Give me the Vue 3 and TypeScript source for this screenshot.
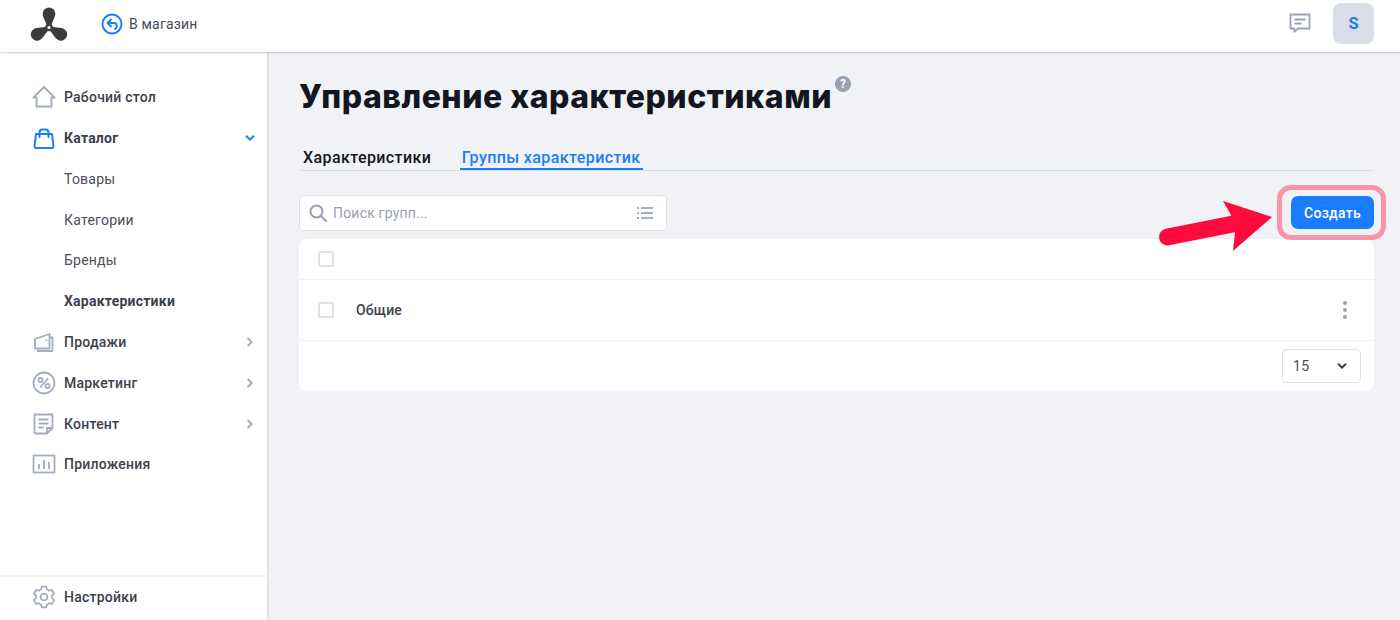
<script setup lang="ts">
const catalogChildren: { label: string; active?: boolean }[] = [
  { label: 'Товары' },
  { label: 'Категории' },
  { label: 'Бренды' },
  { label: 'Характеристики', active: true },
]

function gearPath(): string {
  const pts: string[] = []
  const polar = (r: number, deg: number) => {
    const a = (deg * Math.PI) / 180
    return `${(12 + r * Math.cos(a)).toFixed(2)} ${(12 + r * Math.sin(a)).toFixed(2)}`
  }
  for (let i = 0; i < 6; i++) {
    const c = i * 60 - 90
    pts.push(polar(8.2, c - 21), polar(10.6, c - 11), polar(10.6, c + 11), polar(8.2, c + 21))
  }
  return 'M' + pts.join('L') + 'Z'
}
const gear = gearPath()
const blade = 'M-2.400 -1.500C-2.800 -6 -6.300 -9.500 -6.300 -13.700A6.300 6.300 0 0 1 6.300 -13.700C6.300 -9.500 2.800 -6 2.400 -1.500Z'
</script>

<template>
  <div class="page">
    <header class="topbar">
      <svg class="logo" width="38" height="34" viewBox="0 0 38 34">
        <g fill="#3a3c40">
          <path :d="blade" transform="translate(19 20.500)" />
          <path :d="blade" transform="translate(19 20.500) rotate(120)" />
          <path :d="blade" transform="translate(19 20.500) rotate(240)" />
          <circle cx="19" cy="20.500" r="3.800" />
        </g>
        <circle cx="19" cy="20.500" r="1.600" fill="#fff" />
      </svg>
      <a class="store-link">
        <svg width="22" height="22" viewBox="0 0 22 22" fill="none" stroke="#1a7cff">
          <circle cx="11" cy="11" r="9.500" stroke-width="1.900" />
          <path d="M10 6.500 6.500 10l3.500 3.500M7 10h6c3.200 0 3.800 4.500 1 6" stroke-width="1.900" stroke-linecap="round" stroke-linejoin="round" />
        </svg>
        <span>В магазин</span>
      </a>
      <div class="top-right">
        <svg width="22" height="22" viewBox="0 0 22 22" fill="none" stroke="#9aa3b2" stroke-width="1.800">
          <path d="M1.500 1.500h19v14H9l-3.700 3.300v-3.300H1.500z" stroke-linejoin="round" />
          <path d="M5.500 6.500h11M5.500 10.500h7" />
        </svg>
        <div class="avatar">S</div>
      </div>
    </header>

    <div class="body-row">
      <aside class="sidebar">
        <nav class="nav">
          <a class="nav-item">
            <svg class="ni" width="24" height="24" viewBox="0 0 24 24" fill="none" stroke="#a3adbd" stroke-width="1.800">
              <path d="M1.500 12.500 12 2l10.500 10.500h-3V21.500h-15V12.500z" stroke-linejoin="round" />
            </svg>
            <span class="lbl">Рабочий стол</span>
          </a>
          <a class="nav-item open">
            <svg class="ni" width="24" height="24" viewBox="0 0 24 24" fill="none" stroke="#1a7cff" stroke-width="2">
              <path d="M4 8h16l1.500 12.200a1.500 1.500 0 0 1-1.500 1.800H4a1.500 1.500 0 0 1-1.500-1.800z" stroke-linejoin="round" />
              <path d="M7.500 11V6.500a3 3 0 0 1 3-3h3a3 3 0 0 1 3 3V11" stroke-linecap="round" />
            </svg>
            <span class="lbl">Каталог</span>
            <svg class="chev" width="10" height="10" viewBox="0 0 10 10" fill="none" stroke="#1a7cff" stroke-width="2">
              <path d="M1.500 3.200 5 6.700l3.500-3.500" stroke-linecap="round" />
            </svg>
          </a>
          <a v-for="c in catalogChildren" :key="c.label" class="nav-child" :class="{ active: c.active }">{{ c.label }}</a>
          <a class="nav-item">
            <svg class="ni" width="24" height="24" viewBox="0 0 24 24" fill="none" stroke="#a3adbd" stroke-width="1.800">
              <path d="M3 9 17.500 4v14.500H3z" stroke-linejoin="round" />
              <path d="M17.500 7.500h3v13.500H5" stroke-linejoin="round" />
              <path d="M14.500 9.500v1.500" />
            </svg>
            <span class="lbl">Продажи</span>
            <svg class="chev" width="10" height="10" viewBox="0 0 10 10" fill="none" stroke="#a3adbd" stroke-width="2">
              <path d="M3.200 1.500 6.700 5 3.200 8.500" stroke-linecap="round" />
            </svg>
          </a>
          <a class="nav-item">
            <svg class="ni" width="24" height="24" viewBox="0 0 24 24" fill="none" stroke="#a3adbd" stroke-width="1.800">
              <circle cx="12" cy="12" r="10.500" />
              <circle cx="8.500" cy="9" r="2.100" />
              <circle cx="15.500" cy="15" r="2.100" />
              <path d="M16 7.500 8 16.500" />
            </svg>
            <span class="lbl">Маркетинг</span>
            <svg class="chev" width="10" height="10" viewBox="0 0 10 10" fill="none" stroke="#a3adbd" stroke-width="2">
              <path d="M3.200 1.500 6.700 5 3.200 8.500" stroke-linecap="round" />
            </svg>
          </a>
          <a class="nav-item">
            <svg class="ni" width="24" height="24" viewBox="0 0 24 24" fill="none" stroke="#a3adbd" stroke-width="1.800">
              <path d="M15 21.500H3.500a1 1 0 0 1-1-1V2.500h18v13.500z" stroke-linejoin="round" />
              <path d="M15 21.500V16h5.500M6.500 7.500h10M6.500 11.500h10M6.500 15.500h5" />
            </svg>
            <span class="lbl">Контент</span>
            <svg class="chev" width="10" height="10" viewBox="0 0 10 10" fill="none" stroke="#a3adbd" stroke-width="2">
              <path d="M3.200 1.500 6.700 5 3.200 8.500" stroke-linecap="round" />
            </svg>
          </a>
          <a class="nav-item">
            <svg class="ni" width="24" height="24" viewBox="0 0 24 24" fill="none" stroke="#a3adbd" stroke-width="1.800">
              <rect x="1.500" y="3.500" width="21" height="17" />
              <path d="M7 17v-5M12 17V8M17 17v-7" />
            </svg>
            <span class="lbl">Приложения</span>
          </a>
        </nav>
        <div class="settings">
          <a class="nav-item">
            <svg class="ni" width="24" height="24" viewBox="0 0 24 24" fill="none" stroke="#a3adbd" stroke-width="1.800">
              <path :d="gear" stroke-linejoin="round" />
              <circle cx="12" cy="12" r="3.400" />
            </svg>
            <span class="lbl">Настройки</span>
          </a>
        </div>
      </aside>

      <main class="main">
        <div class="title-row">
          <h1>Управление характеристиками</h1>
          <span class="help">?</span>
        </div>
        <div class="tabs">
          <a class="tab">Характеристики</a>
          <a class="tab current">Группы характеристик</a>
        </div>
        <div class="toolbar">
          <div class="search">
            <svg width="20" height="20" viewBox="0 0 20 20" fill="none" stroke="#97a1b1" stroke-width="2">
              <circle cx="8.500" cy="8.500" r="6" />
              <path d="m13 13 5 5" stroke-linecap="round" />
            </svg>
            <span class="ph">Поиск групп...</span>
            <svg class="list" width="16" height="14" viewBox="0 0 16 14" fill="none" stroke="#8d97a8" stroke-width="1.500">
              <path d="M4 2h12M4 7h12M4 12h12M0 2h2M0 7h2M0 12h2" />
            </svg>
          </div>
          <div class="create-wrap">
            <button class="create">Создать</button>
            <span class="ring"></span>
            <svg class="arrow" width="130" height="60" viewBox="0 0 130 60">
              <path d="M17.500 42 83 29" stroke="#ff0a3f" stroke-width="17" stroke-linecap="round" />
              <path d="M73 6 122 22 83 56 85 38 81 20z" fill="#ff0a3f" />
            </svg>
          </div>
        </div>
        <section class="card">
          <div class="row head"><span class="check"></span></div>
          <div class="row item">
            <span class="check"></span>
            <span class="name">Общие</span>
            <span class="dots"><i></i><i></i><i></i></span>
          </div>
          <div class="foot">
            <div class="select">
              <span>15</span>
              <svg width="10" height="10" viewBox="0 0 10 10" fill="none" stroke="#3a3f4a" stroke-width="2">
                <path d="M1.500 3.200 5 6.700l3.500-3.500" stroke-linecap="round" />
              </svg>
            </div>
          </div>
        </section>
      </main>
    </div>
  </div>
</template>

<style>
html, body { margin: 0; height: 100%; overflow: hidden; }
</style>

<style scoped>
.page {
  width: 1400px;
  height: 620px;
  display: flex;
  flex-direction: column;
  background: #f1f2f5;
  font-family: Roboto, "Liberation Sans", sans-serif;
  color: #2f3440;
  overflow: hidden;
}
.topbar {
  position: relative;
  z-index: 2;
  flex: none;
  height: 52px;
  box-sizing: border-box;
  display: flex;
  align-items: center;
  padding: 0 26px 5px 30px;
  background: #fff;
  box-shadow: 0 1px 2px rgba(60, 70, 90, 0.28);
}
.store-link {
  display: flex;
  align-items: center;
  gap: 6px;
  margin-left: 33px;
  font-size: 14px;
  letter-spacing: 0.18px;
  color: #464b56;
}
.top-right {
  margin-left: auto;
  display: flex;
  align-items: center;
  gap: 22px;
}
.avatar {
  width: 41px;
  height: 41px;
  border-radius: 8px;
  background: #d8dde6;
  color: #1a7cff;
  font-size: 16.500px;
  font-weight: 700;
  display: flex;
  align-items: center;
  justify-content: center;
}
.body-row {
  flex: 1;
  display: flex;
  min-height: 0;
}
.sidebar {
  flex: none;
  width: 267px;
  box-sizing: border-box;
  background: #fff;
  box-shadow: 1px 0 2px rgba(60, 70, 90, 0.16);
  display: flex;
  flex-direction: column;
}
.nav {
  flex: 1;
  padding-top: 24.900px;
  display: flex;
  flex-direction: column;
}
.nav-item {
  height: 40.8px;
  flex: none;
  display: flex;
  align-items: center;
  padding: 0 12px 0 32px;
  font-size: 14px;
  font-weight: 500;
  letter-spacing: 0.23px;
  color: #3c414c;
}
.nav-item.open { font-weight: 700; }
.ni { flex: none; margin-right: 8px; }
.lbl { flex: 1; }
.chev { flex: none; }
.nav-child {
  height: 40.8px;
  flex: none;
  display: flex;
  align-items: center;
  padding-left: 64px;
  font-size: 14px;
  letter-spacing: 0.23px;
  color: #4a4f5a;
}
.nav-child.active { font-weight: 700; color: #3c414c; }
.settings {
  border-top: 2px solid #f3f4f6;
  height: 45px;
  box-sizing: border-box;
  display: flex;
  flex-direction: column;
}
.settings .nav-item { height: 39px; }
.main {
  flex: 1;
  min-width: 0;
  padding: 0 26px 0 32px;
}
.title-row {
  display: flex;
  align-items: flex-start;
  padding-top: 22px;
}
h1 {
  margin: 0;
  font-family: Inter, "Open Sans", sans-serif;
  font-size: 32px;
  line-height: 45px;
  font-weight: 800;
  letter-spacing: 0.5px;
  color: #14161f;
}
.help {
  width: 16px;
  height: 16px;
  margin: 2px 0 0 3px;
  border-radius: 50%;
  background: #98a1b1;
  color: #fff;
  font-size: 12px;
  font-weight: 700;
  line-height: 16px;
  text-align: center;
}
.tabs {
  margin-top: 28px;
  display: flex;
  gap: 26.500px;
  border-bottom: 1px solid #d9dde5;
  height: 23px;
  box-sizing: content-box;
}
.tab {
  height: 23px;
  box-sizing: border-box;
  padding: 0 2px 0 4px;
  font-size: 16px;
  line-height: 22px;
  font-weight: 500;
  letter-spacing: 0.4px;
  color: #14161f;
}
.tab.current {
  padding: 0 2px;
  color: #1a7cff;
  border-bottom: 2px solid #1a7cff;
}
.toolbar {
  margin-top: 24px;
  display: flex;
  align-items: flex-start;
  justify-content: space-between;
  height: 36px;
}
.search {
  width: 368px;
  height: 36px;
  box-sizing: border-box;
  display: flex;
  align-items: center;
  gap: 5px;
  padding: 0 13px 0 8px;
  background: #fff;
  border: 1px solid #dde1e8;
  border-radius: 4px;
}
.ph { flex: 1; font-size: 14px; letter-spacing: 0.2px; color: #98a1b1; }
.create-wrap { position: relative; margin-top: 1px; }
.create {
  display: block;
  width: 83px;
  height: 33px;
  border: 0;
  border-radius: 7px;
  background: #1a7cff;
  color: #fff;
  font-family: inherit;
  font-size: 14px;
  font-weight: 500;
  letter-spacing: 0.25px;
}
.ring {
  position: absolute;
  left: -14px;
  top: -11px;
  width: 109px;
  height: 55px;
  box-sizing: border-box;
  border: 5px solid #fa94ab;
  border-radius: 14px;
}
.arrow {
  position: absolute;
  left: -141px;
  top: -1px;
}
.card {
  margin-top: 8px;
  background: #fff;
  border-radius: 8px;
  overflow: hidden;
}
.row {
  display: flex;
  align-items: center;
  padding: 0 20px 0 19px;
  box-sizing: border-box;
  border-bottom: 1px solid #f1f2f5;
}
.row.head { height: 41px; }
.row.item { height: 61px; }
.check {
  width: 16px;
  height: 16px;
  box-sizing: border-box;
  border: 2px solid #dfe2e8;
  border-radius: 2px;
  background: #fff;
}
.name {
  margin-left: 22px;
  flex: 1;
  font-size: 14px;
  font-weight: 500;
  letter-spacing: 0.2px;
  color: #3c414c;
}
.dots {
  display: flex;
  flex-direction: column;
  gap: 3px;
  margin-right: 7px;
}
.dots i {
  width: 4px;
  height: 4px;
  border-radius: 50%;
  background: #98a1b1;
}
.foot {
  height: 50px;
  box-sizing: border-box;
  display: flex;
  justify-content: flex-end;
  align-items: flex-start;
  padding: 8px 13px 0 0;
}
.select {
  width: 79px;
  height: 34px;
  box-sizing: border-box;
  display: flex;
  align-items: center;
  justify-content: space-between;
  padding: 0 13px 0 10px;
  border: 1px solid #dde1e8;
  border-radius: 4px;
  font-size: 14px;
  letter-spacing: 0.3px;
  color: #464b56;
}
</style>
